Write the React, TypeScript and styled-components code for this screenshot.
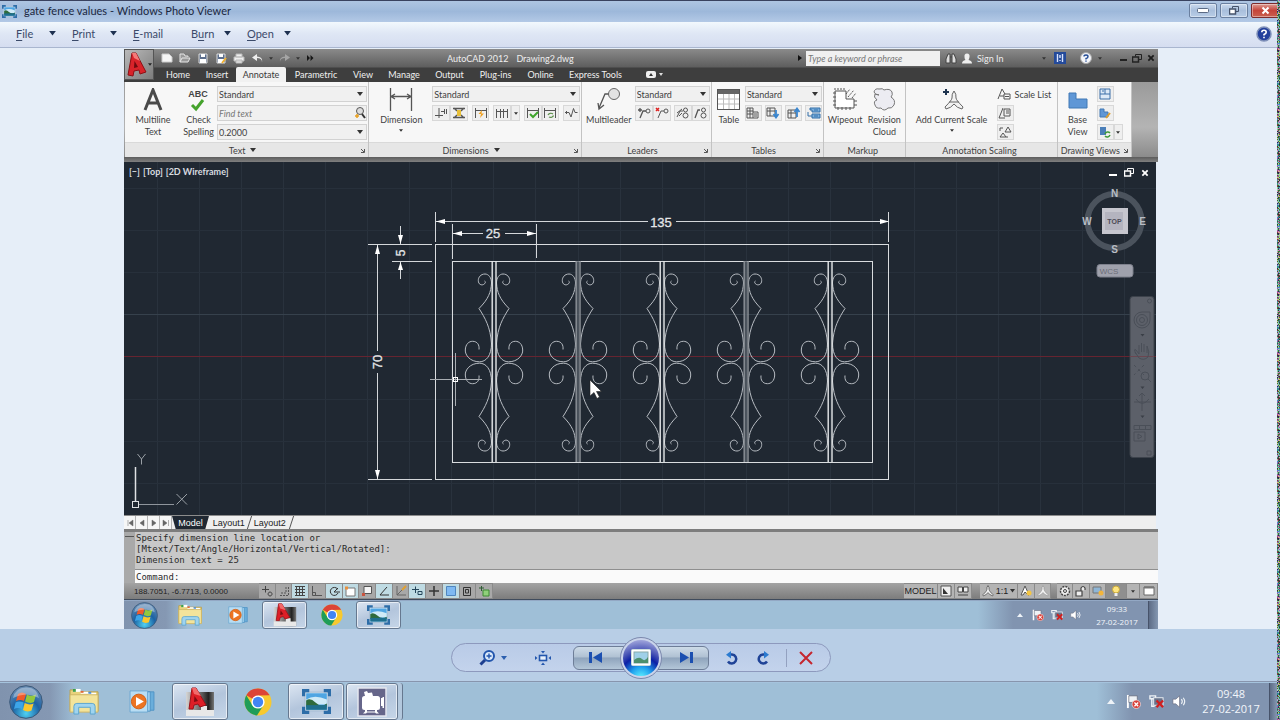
import React from 'react';
import styled, { createGlobalStyle, css } from 'styled-components';

const UI = '"Lato", "Open Sans", sans-serif';
const ARIAL = '"Liberation Sans", Arial, sans-serif';

const Global = createGlobalStyle`
  * { box-sizing: border-box; }
  html, body { margin: 0; padding: 0; }
  body { font-family: ${UI}; background: #b8cee6; }
  button, input, select {
    font: inherit; color: inherit; border: 0; padding: 0; margin: 0;
    background: none; border-radius: 0; outline: none;
  }
  button { cursor: pointer; display: inline-flex; align-items: center; justify-content: center; }
  svg { display: block; flex: none; }
`;

/* ---------- page frame ---------- */

const Screen = styled.div`
  display: grid;
  grid-template-columns: minmax(0, 1fr) 3px;
  min-height: 100vh;
`;

const Desktop = styled.div`
  display: flex;
  flex-direction: column;
  min-width: 0;
  overflow: hidden;
`;

const Edge = styled.div`
  position: relative;
  overflow: hidden;
  svg { position: absolute; inset: 0; width: 100%; height: 100%; }
`;

const TitleBar = styled.header`
  display: flex;
  align-items: center;
  height: 22px;
  padding-left: 2px;
  border-top: 1px solid #39425f;
  background: linear-gradient(#aec5e2, #9db8da 50%, #b3c9e6);
  color: #1b2740;
`;

const WindowTitle = styled.h1`
  flex: 1;
  margin: 0 0 2px 7px;
  font-size: 11px;
  line-height: 16px;
  font-weight: 400;
`;

const WindowButtons = styled.div`
  display: flex;
  gap: 3px;
  align-self: flex-start;
  margin-top: 2px;
  margin-right: -2px;
`;

const WindowButton = styled.button<{ $close?: boolean }>`
  width: 28px;
  height: 15px;
  border: 1px solid ${(p) => (p.$close ? '#7d2c2c' : '#6a7f9f')};
  border-radius: 2px;
  background: ${(p) =>
    p.$close
      ? 'linear-gradient(#dc9c94, #c5453a 50%, #c9604f)'
      : 'linear-gradient(#cbdaee, #a9bfdc 50%, #b9cde6)'};
  box-shadow: inset 0 0 0 1px rgba(255, 255, 255, 0.4);
`;

const MenuBar = styled.nav`
  display: flex;
  align-items: center;
  height: 26px;
  padding: 0 5px 2px 16px;
  border-bottom: 1px solid #a9b6cf;
  background: linear-gradient(#f2f8fd, #dfe7f5 45%, #d5ddf0);
  color: #3b4a6a;
  font-size: 11px;
`;

const MenuItem = styled.button<{ $w: number }>`
  justify-content: flex-start;
  width: ${(p) => p.$w}px;
  height: 20px;
  svg { margin-left: auto; margin-right: 16px; }
  u { text-underline-offset: 2px; }
`;

const Spacer = styled.div`
  flex: 1;
`;

const PhotoArea = styled.main`
  padding: 1px 119px 0 124px;
  background: #e6eef8;
`;

/* ---------- CAD window ---------- */

const Cad = styled.section`
  display: flex;
  flex-direction: column;
  color: #3f3f3f;
`;

const CadTop = styled.div`
  display: flex;
  height: 33px;
  background: linear-gradient(#8a8a8a, #5e5e5e 18px, #3e3e3e 19px, #3e3e3e);
`;

const AppButton = styled.button`
  width: 30px;
  height: 31px;
  gap: 1px;
  background: linear-gradient(135deg, #b9b9b9, #7c7c7c);
  border: 1px solid #555;
`;

const CadTopRows = styled.div`
  flex: 1;
  min-width: 0;
  display: flex;
  flex-direction: column;
`;

const QuickRow = styled.div`
  display: grid;
  grid-template-columns: 293px 1fr 360px;
  align-items: center;
  height: 18px;
  color: #efefef;
  font-size: 9px;
`;

const Quick = styled.div`
  display: flex;
  align-items: center;
  padding-left: 4px;
`;

const QuickButton = styled.button<{ $w?: number }>`
  width: ${(p) => p.$w ?? 18}px;
  height: 16px;
`;

const DocTitle = styled.div`
  display: flex;
  gap: 8px;
  white-space: nowrap;
`;

const InfoCenter = styled.div`
  display: flex;
  align-items: center;
  height: 18px;
`;

const Search = styled.input`
  width: 134px;
  height: 15px;
  margin: 0 4px;
  padding: 0 2px;
  background: #f0f0f0;
  color: #555;
  font-style: italic;
  &::placeholder { color: #777; opacity: 1; }
`;

const SignIn = styled.button`
  gap: 5px;
  width: 84px;
  justify-content: flex-start;
  padding-left: 4px;
`;

const TabRow = styled.div`
  display: flex;
  height: 15px;
  padding-left: 4px;
  align-items: stretch;
  color: #f0f0f0;
  font-size: 9px;
`;

const Tab = styled.button<{ $w: number; $active?: boolean }>`
  width: ${(p) => p.$w}px;
  white-space: nowrap;
  ${(p) =>
    p.$active &&
    css`
      background: #f1f1f1;
      color: #3a3a3a;
      border-radius: 2px 2px 0 0;
    `}
`;

const Ribbon = styled.div`
  display: flex;
  height: 75px;
  padding-left: 1px;
  background: linear-gradient(#9a9a9a, #b4b4b4 60%, #8b8b8b);
  font-size: 9px;
`;

const Panel = styled.section<{ $grow: number }>`
  flex: ${(p) => p.$grow} 1 0;
  min-width: 0;
  display: flex;
  flex-direction: column;
  border-right: 1px solid #c3c3c3;
  background: #f7f7f7;
`;

const PanelBody = styled.div<{ $cols: string }>`
  flex: 1;
  display: grid;
  grid-template-columns: ${(p) => p.$cols};
  align-items: start;
  padding: 4px 1px 0 1px;
`;

const PanelFoot = styled.div`
  display: flex;
  align-items: center;
  height: 15px;
  padding-right: 3px;
  border-top: 1px solid #d9d9d9;
  background: #e6e6e6;
  h2 {
    flex: 1;
    display: flex;
    justify-content: center;
    align-items: center;
    gap: 5px;
    margin: 0;
    font-size: 9px;
    font-weight: 400;
    white-space: nowrap;
  }
`;

const BigButton = styled.button<{ $gap?: number }>`
  flex-direction: column;
  justify-content: flex-start;
  justify-self: center;
  gap: ${(p) => p.$gap ?? 2}px;
  line-height: 12px;
  white-space: nowrap;
  padding-top: 2px;
`;

const Stack = styled.div`
  display: flex;
  flex-direction: column;
  gap: 3px;
`;

const Field = styled.div`
  display: grid;
  grid-template-columns: 1fr 12px;
  align-items: center;
  height: 16px;
  border: 1px solid #d2d2d2;
  background: #f0f0f0;
  select, input { grid-area: 1 / 1 / 2 / 3; width: 100%; height: 14px; padding-left: 1px; appearance: none; }
  svg { grid-area: 1 / 2; justify-self: center; pointer-events: none; }
  input { font-style: italic; }
  input::placeholder { color: #777; opacity: 1; }
`;

const ToolRow = styled.div`
  display: flex;
  justify-content: space-between;
`;

const ToolGroup = styled.div`
  display: flex;
`;

const Tool = styled.button<{ $w?: number }>`
  width: ${(p) => p.$w ?? 17}px;
  height: 16px;
  border: 1px solid #d8d8d8;
  background: #efefef;
`;

const PlainTool = styled.button`
  gap: 4px;
  height: 16px;
  justify-content: flex-start;
  white-space: nowrap;
`;

const RibbonEdge = styled.div`
  height: 5px;
  background: linear-gradient(#5c5c5c, #808080);
`;

const Viewport = styled.div`
  position: relative;
  padding-right: 2px;
  > svg { width: 100%; height: auto; }
`;

const ViewControls = styled.div`
  position: absolute;
  left: 5px;
  top: 4px;
  display: flex;
  gap: 3px;
  color: #d9dce0;
  font-size: 9px;
  line-height: 12px;
  font-weight: 700;
`;

const ViewButtons = styled.div`
  position: absolute;
  right: 9px;
  top: 6px;
  display: flex;
  gap: 7px;
`;

const LayoutTabs = styled.div`
  display: flex;
  align-items: stretch;
  height: 14px;
  margin-right: 2px;
  border-top: 1px solid #8c8c8c;
  background: #efefef;
  color: #222;
  font-family: ${ARIAL};
  font-size: 9px;
`;

const Arrow = styled.button`
  width: 12px;
  background: #f6f6f6;
  border-right: 1px solid #b5b5b5;
`;

const LayoutTab = styled.button<{ $w: number; $active?: boolean }>`
  width: ${(p) => p.$w}px;
  border-right: 1px solid #555;
  transform: skewX(-18deg);
  > span { transform: skewX(18deg); }
  ${(p) =>
    p.$active &&
    css`
      background: #202832;
      color: #fff;
      transform: none;
      > span { transform: none; }
      clip-path: polygon(0 0, 100% 0, 90% 100%, 10% 100%);
      border: 0;
    `}
`;

const CommandWindow = styled.div`
  display: grid;
  grid-template-columns: 11px 1fr;
  border-top: 3px solid #7d7d7d;
  background: #a9a9a9;
  color: #2a2a2a;
  font-family: "DejaVu Sans Mono", "Liberation Mono", monospace;
  font-size: 9px;
  line-height: 11px;
`;

const Grip = styled.div`
  margin: 4px 1px;
  height: 1px;
  background: #555;
`;

const History = styled.div`
  grid-column: 2;
  grid-row: 1;
  padding: 1px 2px 3px 1px;
  background: #c8c8c8;
  border-bottom: 1px solid #8f8f8f;
  p { margin: 0; }
`;

const CommandLine = styled.label`
  grid-column: 2;
  display: flex;
  gap: 4px;
  height: 13px;
  padding: 2px 2px 0 1px;
  background: #fafafa;
  input { flex: 1; height: 10px; }
`;

const StatusBar = styled.div`
  display: flex;
  align-items: stretch;
  height: 17px;
  border-bottom: 1px solid #3f4b5c;
  background: linear-gradient(#a3a3a3, #7c7c7c);
  color: #222;
  font-family: ${ARIAL};
  font-size: 9px;
`;

const Coords = styled.div`
  width: 135px;
  padding-left: 10px;
  font-size: 8px;
  line-height: 18px;
`;

const Toggles = styled.div`
  display: flex;
  width: 234px;
`;

const Toggle = styled.button<{ $on?: boolean }>`
  flex: 1;
  border: 1px solid #8a8a8a;
  border-width: 1px 1px 1px 0;
  background: ${(p) => (p.$on ? '#bfdbe3' : '#a8a8a8')};
`;

const StatusButton = styled.button<{ $w: number; $on?: boolean }>`
  width: ${(p) => p.$w}px;
  gap: 2px;
  border: 1px solid #8a8a8a;
  border-width: 1px 1px 1px 0;
  background: ${(p) => (p.$on ? '#8f8f8f' : '#b4b4b4')};
`;

const StatusGap = styled.div<{ $w: number }>`
  width: ${(p) => p.$w}px;
`;

/* ---------- taskbars ---------- */

const Bar = styled.footer<{ $small?: boolean }>`
  display: flex;
  align-items: stretch;
  height: ${(p) => (p.$small ? 29 : 38)}px;
  border-top: 1px solid ${(p) => (p.$small ? '#93a8c4' : '#a5c3dd')};
  background: linear-gradient(
    90deg,
    #8093ae 0,
    #8598b3 ${(p) => (p.$small ? 42 : 50)}px,
    #9fbfd7 ${(p) => (p.$small ? 64 : 76)}px,
    #9fbfd7 calc(100% - 180px),
    #8194b0 calc(100% - 145px),
    #8194b0
  );
`;

const Orb = styled.button<{ $small?: boolean }>`
  width: ${(p) => (p.$small ? 43 : 55)}px;
  padding-right: ${(p) => (p.$small ? 3 : 4)}px;
`;

const TaskButton = styled.button<{ $small?: boolean; $open?: boolean }>`
  width: ${(p) => (p.$small ? 47 : 58)}px;
  border: 1px solid transparent;
  ${(p) =>
    p.$open &&
    css`
      margin: 0 1px;
      width: ${p.$small ? 45 : 56}px;
      border-color: #66788f;
      border-radius: 3px;
      background: linear-gradient(160deg, #dce6f2, #b3c5dc 50%, #c6d6e8);
      box-shadow: inset 0 0 0 1px rgba(255, 255, 255, 0.6);
    `}
`;

const ButtonStack = styled.div`
  display: flex;
  padding-right: 4px;
  border-right: 1px solid #66788f;
  border-radius: 3px;
  background: #b3c8dd;
  button { width: 52px; margin-right: 0; }
`;

const Tray = styled.div<{ $small?: boolean }>`
  margin-left: auto;
  display: flex;
  align-items: center;
  gap: ${(p) => (p.$small ? 7 : 8)}px;
`;

const TrayArrow = styled.button<{ $small?: boolean }>`
  width: ${(p) => (p.$small ? 10 : 14)}px;
`;

const Clock = styled.time<{ $small?: boolean }>`
  width: ${(p) => (p.$small ? 50 : 64)}px;
  margin-left: ${(p) => (p.$small ? 3 : 4)}px;
  margin-right: ${(p) => (p.$small ? 5 : 3)}px;
  padding-bottom: 1px;
  text-align: center;
  color: #f2f6fb;
  font-family: "Open Sans", "Lato", sans-serif;
  font-size: ${(p) => (p.$small ? 8 : 11)}px;
  line-height: ${(p) => (p.$small ? 13 : 15)}px;
  white-space: nowrap;
`;

const ShowDesktop = styled.button<{ $small?: boolean }>`
  align-self: stretch;
  width: ${(p) => (p.$small ? 10 : 8)}px;
  margin-left: ${(p) => (p.$small ? -6 : -5)}px;
  border-left: 1px solid #47536a;
  background: linear-gradient(90deg, #5d6c86, #8497b1);
`;

/* ---------- viewer controls ---------- */

const Controls = styled.div`
  display: flex;
  justify-content: center;
  align-items: center;
  flex: 1;
  min-height: 53px;
  padding: 5px 0 0 4px;
  border-bottom: 1px solid #8795ad;
  background: #b8cee6;
`;

const Pill = styled.div`
  display: flex;
  align-items: center;
  width: 380px;
  height: 29px;
  padding-left: 14px;
  border: 1px solid #8d99bd;
  border-radius: 15px;
  background: linear-gradient(#b9cbe7, #c3d3ec);
`;

const RoundTool = styled.button<{ $w: number }>`
  width: ${(p) => p.$w}px;
  height: 26px;
  gap: 5px;
`;

const SkipButton = styled.button<{ $side: 'left' | 'right' }>`
  width: 54px;
  height: 24px;
  border: 1px solid #6e7e98;
  border-radius: ${(p) => (p.$side === 'left' ? '6px 0 0 6px' : '0 6px 6px 0')};
  background: linear-gradient(#cddbe8, #b0c1d3 45%, #8fa4bc 50%, #b3c6d8);
  ${(p) => (p.$side === 'left' ? 'margin-right: -7px; padding-right: 8px;' : 'margin-left: -7px; padding-left: 8px;')}
`;

const PlayButton = styled.button`
  z-index: 1;
  width: 42px;
  height: 42px;
  margin: -7px 0;
  border: 1px solid #7b88ad;
  border-radius: 50%;
  background: #c9d3ea;
  &::before {
    content: '';
    grid-area: 1 / 1;
    width: 36px;
    height: 36px;
    border-radius: 50%;
    background: radial-gradient(circle at 50% 105%, #5ff4ff 0, #1fa0ee 26%, #0b1fa5 50%, #4450b4 64%, #c3c6ea 100%);
  }
  display: grid;
  place-items: center;
  svg { grid-area: 1 / 1; }
`;

const Divider = styled.div`
  width: 1px;
  height: 18px;
  margin: 0 4px 0 7px;
  background: #93a1c0;
`;

/* ---------- icons ---------- */

const Caret = ({ s = 6, c = '#333' }: { s?: number; c?: string }) => (
  <svg width={s} height={s / 2 + 1} viewBox="0 0 6 4" aria-hidden="true">
    <path d="M0 0H6L3 4Z" fill={c} />
  </svg>
);

type IconProps = { w?: number; h?: number; box?: string; children: React.ReactNode };
const Icon = ({ w = 14, h, box, children }: IconProps) => (
  <svg
    width={w}
    height={h ?? w}
    viewBox={box ?? `0 0 ${w} ${h ?? w}`}
    fill="none"
    stroke="#555"
    strokeWidth="1"
    aria-hidden="true"
  >
    {children}
  </svg>
);

const PhotoIcon = ({ w }: { w: number }) => (
  <Icon w={w} h={Math.round(w * 0.86)} box="0 0 28 24">
    <rect x="3" y="3" width="22" height="18" fill="#f4f9fd" stroke="#9fb8cf" />
    <rect x="4" y="4" width="20" height="16" fill="#4fa5e2" stroke="none" />
    <path d="M4 10Q12 5 24 10V15H4Z" fill="#cfeaf7" stroke="none" />
    <path d="M4 11Q8 8 13 13T24 14V17H4Z" fill="#2f6b3c" stroke="none" />
    <path d="M4 15.500H24V20H4Z" fill="#1f6f8e" stroke="none" />
    <path d="M1.500 7V1.500H7M21 1.500H26.500V7M26.500 17V22.500H21M7 22.500H1.500V17" stroke="#2d6da8" strokeWidth="3" />
  </Icon>
);

const OrbIcon = ({ w }: { w: number }) => (
  <Icon w={w} box="0 0 34 34">
    <defs>
      <radialGradient id="orb" cx="50%" cy="85%" r="85%">
        <stop offset="0" stopColor="#4fd0f2" />
        <stop offset=".5" stopColor="#1c62a3" />
        <stop offset="1" stopColor="#6f91b6" />
      </radialGradient>
    </defs>
    <circle cx="17" cy="17" r="16.3" fill="url(#orb)" stroke="#3b5878" />
    <g stroke="none">
      <path d="M9 9Q13 6 17 9L15 16Q11 14 7 16Z" fill="#ee5a2b" />
      <path d="M18 9.500Q22 12 27 9.500L25 17Q21 19 16 16.500Z" fill="#93c83d" />
      <path d="M6.600 17.500Q10 15.500 14.500 17.500L13 24Q9 22 5 24Z" fill="#3da5e8" />
      <path d="M15.700 18Q20 20.500 24.600 18.500L22.500 25.500Q18 27.500 14 25Z" fill="#fbc72c" />
    </g>
    <path d="M4 13Q6 3 17 2.500T30 13Q17 6 4 13Z" fill="#fff" fillOpacity=".35" stroke="none" />
  </Icon>
);

const FolderIcon = ({ w }: { w: number }) => (
  <Icon w={w} h={Math.round(w * 0.88)} box="0 0 32 28">
    <path d="M1 6V2H10L12 4H30V24H1Z" fill="#e9d27c" stroke="#b99e4a" />
    <path d="M4 1H12V4H4Z" fill="#fff" stroke="none" />
    <path d="M4 1H7V4H4Z" fill="#3fa04a" stroke="none" />
    <path d="M12 4H20V6H12ZM20 5H28V8H20Z" fill="#fff" stroke="none" />
    <path d="M12 3H15V5H12Z" fill="#e06a38" stroke="none" />
    <path d="M20 4H23V6H20Z" fill="#4a90d9" stroke="none" />
    <path d="M1 7H30V25H1Z" fill="#f3e49b" stroke="#cdb565" />
    <path d="M5 27V19Q5 16 8 16H24Q27 16 27 19V27H22V20H10V27Z" fill="#9fd4ef" stroke="#5ba4cf" />
  </Icon>
);

const MediaIcon = ({ w }: { w: number }) => (
  <Icon w={w} h={Math.round(w * 0.9)} box="0 0 28 25">
    <path d="M8 2H27V22H8Z" fill="#6aaedb" stroke="#4f93c4" />
    <path d="M5 2H23V23H5Z" fill="#9ccdec" stroke="#4f93c4" />
    <path d="M1 1H20V24H1Z" fill="#b9ddf3" stroke="#6aa7d1" />
    <circle cx="10.500" cy="12.500" r="8" fill="#ec7423" stroke="#d05c10" />
    <path d="M7.500 7.500L16 12.500L7.500 17.500Z" fill="#fff" stroke="none" />
  </Icon>
);

const CadIcon = ({ w }: { w: number }) => (
  <Icon w={w} box="0 0 30 30">
    <defs>
      <linearGradient id="cadbg" x1="0" y1="0" x2="1" y2="0">
        <stop offset="0" stopColor="#d5d5d5" />
        <stop offset=".6" stopColor="#555" />
        <stop offset=".8" stopColor="#222" />
        <stop offset="1" stopColor="#777" />
      </linearGradient>
    </defs>
    <rect x="1" y="5" width="28" height="24" fill="url(#cadbg)" stroke="none" />
    <path d="M1 23H16V19H22V23H29V29H1Z" fill="#e8e8e8" stroke="none" />
    <path d="M4 22L7 1L11 1L21 18L15 20L13 17L9 18L8 22Z" fill="#dd1f27" stroke="#9c1118" />
    <path d="M9.500 9L13 14L9 15Z" fill="#7d0c12" stroke="none" />
    <path d="M7 1L11 1L16 9L9 7Z" fill="#f26a6a" stroke="none" />
  </Icon>
);

const ChromeIcon = ({ w }: { w: number }) => (
  <Icon w={w} box="0 0 28 28">
    <g stroke="none">
      <circle cx="14" cy="14" r="13.500" fill="#f7c92f" />
      <path d="M14 14L2.300 7.250A13.500 13.500 0 0 1 25.700 7.250L14 7.500Z" fill="#dc4437" />
      <path d="M2.300 7.250A13.500 13.500 0 0 0 13 27.460L19.600 17L14 14L8.400 17.250Z" fill="#1f9d58" />
      <circle cx="14" cy="14" r="6.600" fill="#fff" />
      <circle cx="14" cy="14" r="5.200" fill="#4285f4" />
    </g>
  </Icon>
);

const CameraIcon = () => (
  <Icon w={30}>
    <rect x="1" y="1" width="28" height="28" fill="#66668a" stroke="#e4e6ee" strokeWidth="1.500" />
    <g fill="#fff" stroke="none">
      <path d="M7 5L10 4L11 6L15 5.500L16 9H8Z" />
      <rect x="5" y="9" width="18" height="14" rx="2.500" />
      <path d="M24 11H25.500V10H27V21H25.500V19H24Z" />
      <path d="M8 23H10V24.500H18V23H20V24.500L22 26.500H19L18 25.500H10L9 26.500H6L8 24.500Z" />
    </g>
  </Icon>
);

const FlagIcon = ({ w }: { w: number }) => (
  <Icon w={w} box="0 0 16 16">
    <path d="M2 1V15" stroke="#fff" strokeWidth="2" />
    <path d="M3 2H12V9H3Z" fill="#eef2f6" stroke="#556" strokeWidth=".6" />
    <circle cx="11" cy="11" r="4.500" fill="#d8403a" stroke="#fff" strokeWidth=".6" />
    <path d="M9 9L13 13M13 9L9 13" stroke="#fff" strokeWidth="1.400" />
  </Icon>
);

const NetIcon = ({ w }: { w: number }) => (
  <Icon w={w} box="0 0 16 16">
    <path d="M1 2H7V5H1ZM3 5V13H6" stroke="#eef2f6" strokeWidth="1.500" />
    <rect x="5" y="4" width="10" height="8" fill="#68748c" stroke="#eef2f6" />
    <path d="M8 7L15 14M15 7L8 14" stroke="#d11f1f" strokeWidth="2.400" />
  </Icon>
);

const SoundIcon = ({ w }: { w: number }) => (
  <Icon w={w} box="0 0 16 16">
    <path d="M1 5.500H4L8 2V14L4 10.500H1Z" fill="#fff" stroke="#667" strokeWidth=".6" />
    <path d="M10 5.500Q12 8 10 10.500M12 4Q15 8 12 12" stroke="#eef2f6" strokeWidth="1.200" />
  </Icon>
);

const RestoreIcon = ({ c = '#333', fill = 'none' }: { c?: string; fill?: string }) => (
  <Icon w={10} h={9}>
    <path d="M3.500 2.500V.5H9.500V5.500H7" stroke={c} fill="none" />
    <rect x=".5" y="3" width="6" height="5" stroke={c} fill={fill} strokeWidth="1.500" />
  </Icon>
);

const CrossIcon = ({ c, w = 9 }: { c: string; w?: number }) => (
  <Icon w={w} box="0 0 9 9">
    <path d="M1.500 1.500L7.500 7.500M7.500 1.500L1.500 7.500" stroke={c} strokeWidth="2" />
  </Icon>
);

const Corner = () => (
  <Icon w={5}>
    <path d="M1 1L4 4M4.500 1V4.500H1" />
  </Icon>
);

const ScaleMark = ({ w = 12, c = '#555' }: { w?: number; c?: string }) => (
  <Icon w={w} box="0 0 22 22">
    <path
      d="M11 1Q13.500 4 13 8Q13 11 20.500 18L19.500 20Q14 18 11 14Q8 18 2.500 20L1.500 18Q9 11 9 8Q8.500 4 11 1Z"
      stroke={c}
      strokeWidth="1.500"
      fill="#f2f2f2"
    />
  </Icon>
);

/* dimension tool symbols, 14 x 12 */
const dimTools: Record<string, React.ReactNode> = {
  brk: <path d="M1 8.500H9M5 1V11M7 4.500H10M10.500 2V7M12.500 2V7" stroke="#555" />,
  adjust: (
    <>
      <path d="M1 1.500H13M1 10.500H13M2 1L5 4M12 1L9 4M2 11L5 8M12 11L9 8" strokeWidth="1.400" />
      <rect x="5" y="3" width="4" height="6" fill="#e8c03a" stroke="none" />
    </>
  ),
  quick: (
    <>
      <path d="M1.500 1V11M12.500 1V11M2 3.500H12" />
      <path d="M8 3L4.500 7H7L6 11L10 6.500H7.500Z" fill="#f0a020" stroke="none" />
    </>
  ),
  cont: <path d="M1.500 2V11M5.500 2V11M8.500 2V11M12.500 2V11M2 4.500H12" />,
  check: (
    <>
      <path d="M1.500 1V11M12.500 1V11M2 3.500H12" />
      <path d="M4 7L7 10L12 5" stroke="#3fa52c" strokeWidth="2" />
    </>
  ),
  update: (
    <>
      <path d="M1.500 1V11M12.500 1V11M2 3.500H12" />
      <path d="M5 8A3 2.500 0 0 1 10 7M10.500 8.500A3 2.500 0 0 1 6 10" stroke="#5b8f4a" strokeWidth="1.200" />
    </>
  ),
  jog: <path d="M1 5.500H5M3 4L1.500 5.500L3 7M5 5.500L7 10L9.500 1.500L11 5.500H13.500" />,
  addL: <path d="M1 3H5M3 1V5M3 11L6 4H9" strokeWidth="1.300" />,
  remL: (
    <>
      <path d="M3 11L6 4H9" />
      <path d="M1 1L4 4M4 1L1 4" stroke="#d22" strokeWidth="1.500" />
    </>
  ),
  alignL: (
    <>
      <path d="M1 10L4 4H7M3 9L6 6M1 6L6 2" />
      <circle cx="9.500" cy="3" r="2" />
      <circle cx="9.500" cy="8.500" r="2.500" />
    </>
  ),
  collectL: (
    <>
      <path d="M1 11L4 3H6" strokeWidth="1.300" />
      <circle cx="9.500" cy="3" r="2" />
      <circle cx="9.500" cy="8.500" r="2.500" />
    </>
  ),
  tblA: <path d="M1 1H7V11H1ZM1 4H7M1 7H7M4 1V11M7 5H12V11H7M8 7H11M8 9H11" />,
  tblB: (
    <>
      <path d="M1 1H9V9H1ZM1 4H9M4 1V9" />
      <path d="M10 3V9M7.500 7L10 10.500L12.500 7" stroke="#3a86cf" strokeWidth="1.800" />
    </>
  ),
  tblC: (
    <>
      <path d="M1 3H9V11H1ZM1 6H9M4 3V11" />
      <path d="M10 10V3M7.500 5L10 1.500L12.500 5" stroke="#3a86cf" strokeWidth="1.800" />
    </>
  ),
  tblD: (
    <>
      <path d="M3 1H13V5H5V3H3ZM5 7H13V11H5Z" fill="#79aedd" stroke="#336fa8" />
      <path d="M1 5V9H5M7 9H11M7 3H11" stroke="#336fa8" />
    </>
  ),
};
const RingEnd = () => <circle cx="11" cy="4" r="2" />;
const DimTool = ({ id }: { id: string }) => (
  <Icon w={14} h={12}>
    {dimTools[id]}
    {(id === 'addL' || id === 'remL') && <RingEnd />}
  </Icon>
);

const statusSymbols: [string, React.ReactNode, boolean][] = [
  ['Infer constraints', <path key="a" d="M1 4.500H8M4.500 1V7.500M9 7a2 2 0 1 0 .1 0" stroke="#444" />, false],
  ['Snap', <path key="a" d="M2 10.500H10.500V2M8 2V8H2" strokeDasharray="2 1" />, false],
  ['Grid', <path key="a" d="M1 1.500H11M1 4.500H11M1 7.500H11M1 10.500H11M2.500 1V11M5.500 1V11M8.500 1V11" stroke="#444" />, true],
  ['Ortho', <path key="a" d="M1.500 1V10.500H11M2 7.500H4.500V10" />, false],
  ['Polar', <path key="a" d="M9.500 4A4 4 0 1 0 10 8M6 7H12M6 7L10 3" stroke="#333" />, true],
  ['Osnap', (
    <g key="a">
      <path d="M2 3H11V11H2Z" fill="#fff" stroke="#777" />
      <path d="M1 1.500H4V4.500H1Z" fill="#e8913e" stroke="none" />
    </g>
  ), true],
  ['3D Osnap', (
    <g key="a">
      <path d="M3 1.500H10.500V8.500H3Z" fill="#f5f5f5" stroke="#555" />
      <path d="M1 8H4V11H1Z" fill="#c9543f" stroke="none" />
    </g>
  ), false],
  ['Tracking', <path key="a" d="M9 2L2 10H11" stroke="#333" />, true],
  ['Dynamic UCS', (
    <g key="a">
      <path d="M2 1V10H11M2 10L8 4" stroke="#666" />
      <path d="M7 5L11 1" stroke="#e0a030" strokeWidth="2" />
    </g>
  ), false],
  ['Dynamic input', <path key="a" d="M1 4.500H8M4.500 1.500V8M7 6.500H11V9.500H7Z" stroke="#25465a" />, true],
  ['Lineweight', <path key="a" d="M1 6H11M6 1V11" stroke="#333" strokeWidth="1.500" />, false],
  ['Transparency', <path key="a" d="M1.500 1.500H10.500V10.500H1.500Z" fill="#7fb9f2" stroke="#4f86bf" />, true],
  ['Quick properties', <path key="a" d="M2.500 2.500H9.500V10.500H2.500ZM4.500 4.500H7.500V8H4.500Z" stroke="#333" />, false],
  ['Selection cycling', (
    <g key="a">
      <path d="M1 3H6M3.500 1V6" stroke="#2f5d33" />
      <path d="M5 5H11V11H5Z" fill="#8fd07a" stroke="#3f8a35" />
    </g>
  ), false],
];

/* ---------- drawing ---------- */

const verticals = Array.from({ length: 24 }, (_, i) => 157.5 + Math.round(i * 42.05));
const horizontals = [188.5, 230.5, 272.5, 314.5, 399.5, 441.5, 483.5];
const posts = [494, 578, 662, 746, 830];

const HalfScroll = () => (
  <g>
    <path d="M2.500 283C2.500 277.500 5.500 274 9 274C13.500 274 15.700 277.500 15.700 280.500C15.700 284.500 12.500 285.500 10.500 284.500C8.500 283.500 8 281.500 9.500 281" />
    <path d="M2.500 283C3 292 5.500 299 15 308.500C9 318 3.500 327 2.500 344" />
    <path d="M2.500 343C2.500 356 8 361.800 14.500 361.800C24 361.800 29 355 28.700 350C28.500 344 25 341.300 21.500 341.300C16.500 341.300 14.500 345 15 349.500" />
  </g>
);

const FencePost = ({ x, soft }: { x: number; soft: boolean }) => (
  <g transform={`translate(${x} 0)`}>
    {[1, -1].map((sx) => (
      <g key={sx} transform={`scale(${sx} 1)`}>
        <HalfScroll />
        <g transform="translate(0 725) scale(1 -1)">
          <HalfScroll />
        </g>
      </g>
    ))}
    <g stroke={soft ? '#898e95' : '#e6e8ea'} strokeWidth={soft ? 1.5 : 1.4}>
      <path d="M-1.800 261V462M2 261V462" />
      {soft && <path d="M0 261V462" stroke="#59616a" />}
    </g>
  </g>
);

const Drawing = () => (
  <svg viewBox="124 162 1032 353" fill="none" role="img" aria-label="Gate fence drawing with dimensions">
    <rect x="124" y="162" width="1032" height="353" fill="#202832" />
    <g stroke="#29323d">
      {verticals.map((x) => (
        <path key={x} d={`M${x} 162V515`} />
      ))}
      {horizontals.map((y) => (
        <path key={y} d={`M124 ${y}H1156`} stroke={y === 314.5 ? '#36414c' : '#27303b'} />
      ))}
    </g>
    <path d="M124 356.500H1156" stroke="#662430" />

    <g stroke="#d9dcdf">
      <rect x="435.500" y="244.500" width="453" height="235" />
      <rect x="452.500" y="261.500" width="420" height="201" />
    </g>
    <g stroke="#b8bdc3">
      {posts.map((x, i) => (
        <FencePost key={x} x={x} soft={i % 2 === 1} />
      ))}
    </g>

    <g stroke="#d4d7da">
      <path d="M435.500 212V242M888.500 212V242M436 221.500H648M676 221.500H889" />
      <path d="M452.500 224V259M536.500 224V258M453 233.500H483M505 233.500H536" />
      <path d="M368 244.500H432M368 479.500H432M377.500 245V351M377.500 373V479" />
      <path d="M392 261.500H432M400.500 226V244M400.500 262V279" />
    </g>
    <g fill="#fff">
      <path d="M436 221.500L445 219V224ZM889 221.500L880 219V224Z" />
      <path d="M453 233.500L462 231V236ZM536 233.500L527 231V236Z" />
      <path d="M377.500 245L375 254H380ZM377.500 479L375 470H380Z" />
      <path d="M400.500 244L398 235H403ZM400.500 262L398 270H403Z" />
    </g>
    <g fill="#e4e6e8" fontFamily={ARIAL} fontSize="13" textAnchor="middle" stroke="#e4e6e8" strokeWidth=".3">
      <text x="661" y="227">135</text>
      <text x="493" y="238">25</text>
      <text transform="translate(382 362) rotate(-90)">70</text>
      <text transform="translate(404.500 253) rotate(-90)" fontSize="12">5</text>
    </g>

    <g stroke="#a8adb2">
      <path d="M430 379.500H482M455.500 353V406" />
      <rect x="453.500" y="377.500" width="4" height="4" stroke="#fff" />
    </g>
    <path d="M590 380V396L594 392.500L597 398.500L599.500 397L596.500 391.500H601.500Z" fill="#fff" stroke="#222" strokeWidth=".6" />

    <g stroke="#dfe1e4">
      <path d="M135.500 467V501" strokeWidth="1.500" />
      <path d="M139 504.500H174" stroke="#8f959c" />
      <rect x="132.500" y="501.500" width="6" height="6" />
      <path d="M176.500 494L187 504.500M187 494L176.500 504.500M137.500 454L141.500 459L145.500 454M141.500 459V464.500" stroke="#9aa0a6" />
    </g>

    <circle cx="1114.500" cy="221" r="27" stroke="#4b535d" strokeWidth="6" />
    <g fill="#b9bdc4" fontFamily={ARIAL} fontWeight="700" fontSize="10" textAnchor="middle">
      <text x="1114.500" y="197">N</text>
      <text x="1114.500" y="253">S</text>
      <text x="1142.500" y="225">E</text>
      <text x="1087" y="225">W</text>
    </g>
    <rect x="1102" y="208" width="26" height="26" fill="#c6c6ce" />
    <rect x="1105" y="212" width="18" height="18" fill="#b4b4bf" />
    <text x="1114.500" y="224" fill="#4c4c57" fontFamily={ARIAL} fontSize="7" fontWeight="700" textAnchor="middle">
      TOP
    </text>
    <rect x="1097" y="264.500" width="36" height="12.500" rx="3" fill="#9fa1ac" stroke="#7d808c" />
    <text x="1109" y="273.500" fill="#6b6d78" fontFamily={ARIAL} fontSize="8" textAnchor="middle">
      WCS
    </text>

    <rect x="1130" y="296.500" width="24" height="161" rx="3" fill="#5c6069" stroke="#3c424b" />
    <path d="M1130 356.500H1154" stroke="#6b4650" />
    <g stroke="#4a4f58">
      <path d="M1134 320A8 8 0 0 1 1142 312H1150V320A8 8 0 0 1 1134 320Z" />
      <circle cx="1142" cy="320" r="5.500" />
      <circle cx="1142" cy="320" r="2.500" />
      <circle cx="1149.500" cy="301" r="2" />
      <path d="M1136 354Q1133 348 1136 350L1139 354V345M1141.500 352V343M1144 352V344M1147 353V346Q1150 352 1148 357Q1144 361 1139 358L1135 352" />
      <path d="M1134 365L1144 375M1144 365L1134 375" strokeDasharray="3 3" />
      <circle cx="1145" cy="376" r="4" />
      <path d="M1148 379L1151 382M1134 402H1151M1142 393V411M1139 396L1142 393L1145 396M1136 399Q1142 408 1149 399" />
      <path d="M1134 425.500H1151V429.500H1134ZM1139.500 425V429M1145.500 425V429M1134 432H1145V441H1134ZM1138 434L1142 436.500L1138 439Z" />
      <path d="M1147 451H1151V455H1147Z" />
    </g>
    <g fill="#3a3f47">
      <path d="M1140.500 334H1144.500L1142.500 336.500ZM1140.500 386.500H1144.500L1142.500 389ZM1140.500 415.500H1144.500L1142.500 418Z" />
    </g>
  </svg>
);

const noiseColors = ['#3c6b3a', '#a04e9c', '#2b2b46', '#c8cf6e', '#5a7fd0', '#d08fa8', '#7fd09a', '#804038', '#b9b9c8', '#2f8f8a'];
const noiseCells = Array.from({ length: 183 }).reduce<number[]>((seq) => {
  const last = seq.length ? seq[seq.length - 1] : 17;
  return [...seq, (last * 1103 + 12345) % 7919];
}, []);
const Noise = () => (
  <svg aria-hidden="true">
    <defs>
      <pattern id="noise" width="3" height="61" patternUnits="userSpaceOnUse">
        {noiseCells.map((n, i) => (
          <rect key={i} x={i % 3} y={Math.floor(i / 3)} width="1" height="1" fill={noiseColors[n % 10]} />
        ))}
      </pattern>
    </defs>
    <rect width="100%" height="100%" fill="url(#noise)" />
  </svg>
);

/* ---------- composed parts ---------- */

const Combo = ({ label, value }: { label: string; value: string }) => (
  <Field>
    <select aria-label={label} defaultValue={value}>
      <option>{value}</option>
    </select>
    <Caret />
  </Field>
);

const Foot = ({ title, caret, corner }: { title: string; caret?: boolean; corner?: boolean }) => (
  <PanelFoot>
    <h2>
      {title}
      {caret && <Caret />}
    </h2>
    {corner && <Corner />}
  </PanelFoot>
);

const Taskbar = ({ small, time, camera }: { small?: boolean; time: string; camera?: boolean }) => {
  const k = (big: number, little: number) => (small ? little : big);
  return (
    <Bar $small={small}>
      <Orb $small={small} aria-label="Start">
        <OrbIcon w={k(34, 27)} />
      </Orb>
      <TaskButton $small={small} aria-label="Explorer">
        <FolderIcon w={k(31, 25)} />
      </TaskButton>
      <TaskButton $small={small} aria-label="Media Player">
        <MediaIcon w={k(26, 20)} />
      </TaskButton>
      <TaskButton $small={small} $open aria-label="AutoCAD">
        <CadIcon w={k(30, 24)} />
      </TaskButton>
      <TaskButton $small={small} aria-label="Chrome">
        <ChromeIcon w={k(28, 22)} />
      </TaskButton>
      <TaskButton $small={small} $open aria-label="Photo Viewer">
        <PhotoIcon w={k(29, 23)} />
      </TaskButton>
      {camera && (
        <ButtonStack>
          <TaskButton $open aria-label="Screen recorder">
            <CameraIcon />
          </TaskButton>
        </ButtonStack>
      )}
      <Tray $small={small}>
        <TrayArrow $small={small} aria-label="Show hidden icons">
          <svg width={k(8, 6)} height={k(5, 4)} viewBox="0 0 8 5" aria-hidden="true">
            <path d="M0 5L4 0L8 5Z" fill="#eef3f8" />
          </svg>
        </TrayArrow>
        <FlagIcon w={k(15, 12)} />
        <NetIcon w={k(15, 12)} />
        <SoundIcon w={k(15, 12)} />
        <Clock $small={small}>
          {time}
          <br />
          27-02-2017
        </Clock>
        <ShowDesktop $small={small} aria-label="Show desktop" />
      </Tray>
    </Bar>
  );
};

const tabs: [string, number][] = [
  ['Home', 40],
  ['Insert', 38],
  ['Annotate', 50],
  ['Parametric', 60],
  ['View', 34],
  ['Manage', 48],
  ['Output', 43],
  ['Plug-ins', 49],
  ['Online', 41],
  ['Express Tools', 69],
];

const CadWindow = () => (
  <Cad>
    <CadTop>
      <AppButton aria-label="Application menu">
        <svg width="20" height="26" viewBox="0 0 20 26" aria-hidden="true">
          <path d="M1 23L5 1H9L19 20L13 22L12 18L7 19L6 24Z" fill="#d8232a" stroke="#8d1015" />
          <path d="M7.500 9L11 15L7 16Z" fill="#6f0a0f" />
          <path d="M5 1H9L13 9L7 6Z" fill="#f47a78" />
        </svg>
        <Caret s={4} c="#222" />
      </AppButton>
      <CadTopRows>
        <QuickRow>
          <Quick>
            <QuickButton aria-label="New">
              <Icon w={12} h={10}><path d="M1 1H8L11 4V9H1Z" fill="#f5f5f5" stroke="#ccc" /></Icon>
            </QuickButton>
            <QuickButton aria-label="Open">
              <Icon w={12} h={10}><path d="M1 9V1H5L6 3H9V4M1 9L3 5H11L9 9Z" stroke="#e5e5e5" fill="#999" /></Icon>
            </QuickButton>
            <QuickButton aria-label="Save">
              <Icon w={10} h={11}><path d="M1 1H9V10H1Z" fill="#5d6f8d" stroke="#ddd" /><path d="M3 1H7V4H3ZM2 6H8V10H2Z" fill="#fff" stroke="none" /></Icon>
            </QuickButton>
            <QuickButton aria-label="Save as">
              <Icon w={11} h={11}><path d="M1 1H9V10H1Z" fill="#5d6f8d" stroke="#ddd" /><path d="M3 1H7V4H3ZM2 6H8V10H2Z" fill="#fff" stroke="none" /><path d="M6 10L10 5" stroke="#f0b030" strokeWidth="2" /></Icon>
            </QuickButton>
            <QuickButton aria-label="Plot">
              <Icon w={12} h={11}><path d="M3 1H9V4H3ZM1 4H11V8H1ZM3 7H9V10H3Z" fill="#eee" stroke="#bbb" /></Icon>
            </QuickButton>
            <QuickButton aria-label="Undo">
              <Icon w={11} h={9}><path d="M10 8Q10 4 5 4V7L0 3.500L5 0V2.500Q11 3 10 8Z" fill="#eee" stroke="none" /></Icon>
            </QuickButton>
            <QuickButton $w={9} aria-label="Undo list"><Caret s={4} /></QuickButton>
            <QuickButton aria-label="Redo">
              <Icon w={11} h={9}><path d="M1 8Q1 4 6 4V7L11 3.500L6 0V2.500Q0 3 1 8Z" fill="#a5a5a5" stroke="none" /></Icon>
            </QuickButton>
            <QuickButton $w={9} aria-label="Redo list"><Caret s={4} /></QuickButton>
            <QuickButton $w={16} aria-label="More tools">
              <Icon w={7} h={6}><path d="M0 0L3 3L0 6ZM3.500 0L6.500 3L3.500 6Z" fill="#161616" stroke="none" /></Icon>
            </QuickButton>
          </Quick>
          <DocTitle>
            <span>AutoCAD 2012</span>
            <span>Drawing2.dwg</span>
          </DocTitle>
          <InfoCenter>
            <Icon w={4} h={6}><path d="M0 0L4 3L0 6Z" fill="#111" stroke="none" /></Icon>
            <Search aria-label="Search help" placeholder="Type a keyword or phrase" />
            <QuickButton $w={14} aria-label="Search">
              <Icon w={12} h={11}><path d="M1 10V6L3 1H5V10ZM7 10V1H9L11 6V10ZM5 4H7" fill="#ddd" stroke="#444" /></Icon>
            </QuickButton>
            <SignIn>
              <Icon w={10} h={11}><path d="M5 .5Q8 .5 7.500 4Q7 6.500 6.500 7Q10 7.500 10 10.500H0Q0 7.500 3.500 7Q2.500 6 2.500 4Q2 .5 5 .5Z" fill="#eee" stroke="none" /></Icon>
              Sign In
            </SignIn>
            <Caret s={4} />
            <QuickButton $w={28} aria-label="Exchange">
              <Icon w={12}><rect width="12" height="12" fill="#244a9a" stroke="none" /><path d="M3.500 2V10M8.500 2V10M6 3V6M6 8V9" stroke="#dbe6ff" strokeWidth="1.400" /></Icon>
            </QuickButton>
            <QuickButton $w={24} aria-label="Help">
              <Icon w={12}><circle cx="6" cy="6" r="5.500" fill="#f4f6fa" stroke="#aaa" /><path d="M4 4.500Q4 3 6 3T8 4.700Q8 6 6 6.500V7.500M6 8.500V9.800" stroke="#234b95" strokeWidth="1.400" /></Icon>
            </QuickButton>
            <Caret s={4} />
            <Spacer />
            <QuickButton $w={12} aria-label="Minimize">
              <Icon w={8} h={8}><path d="M0 6H7" stroke="#222" strokeWidth="2" /></Icon>
            </QuickButton>
            <QuickButton $w={14} aria-label="Restore"><RestoreIcon c="#222" /></QuickButton>
            <QuickButton $w={14} aria-label="Close"><CrossIcon c="#1c1c1c" w={8} /></QuickButton>
          </InfoCenter>
        </QuickRow>
        <TabRow role="tablist">
          {tabs.map(([name, w]) => (
            <Tab key={name} role="tab" $w={w} $active={name === 'Annotate'} aria-selected={name === 'Annotate'}>
              {name}
            </Tab>
          ))}
          <Tab $w={50} aria-label="Ribbon display">
            <Icon w={18} h={7}><rect y="0" width="10" height="7" rx="2" fill="#eee" stroke="none" /><path d="M3 5L5 2L7 5Z" fill="#333" stroke="none" /><path d="M13 2H17L15 5Z" fill="#ddd" stroke="none" /></Icon>
          </Tab>
        </TabRow>
      </CadTopRows>
    </CadTop>

    <Ribbon>
      <Panel $grow={245}>
        <PanelBody $cols="54px 37px 1fr">
          <BigButton $gap={3}>
            <svg width="20" height="23" viewBox="0 0 20 23" aria-hidden="true">
              <path d="M2 22L10 2L18 22M5 15H15" stroke="#4a4a4a" strokeWidth="3" fill="none" />
            </svg>
            <span>Multiline<br />Text</span>
          </BigButton>
          <BigButton $gap={1}>
            <svg width="22" height="25" viewBox="0 0 22 25" aria-hidden="true">
              <text x="11" y="9" textAnchor="middle" fontFamily="Liberation Sans" fontWeight="700" fontSize="9" fill="#444">ABC</text>
              <path d="M5 17L9 21L16 12" stroke="#45a32d" strokeWidth="3" fill="none" />
            </svg>
            <span>Check<br />Spelling</span>
          </BigButton>
          <Stack>
            <Combo label="Text style" value="Standard" />
            <Field>
              <input aria-label="Find text" placeholder="Find text" />
              <Icon w={12}><circle cx="6" cy="4" r="3.500" stroke="#555" fill="#ddd" /><path d="M8 7L11 11" stroke="#333" strokeWidth="2" /><path d="M3 7V11M1 9H5" stroke="#e8a020" strokeWidth="1.500" /></Icon>
            </Field>
            <Combo label="Text height" value="0.2000" />
          </Stack>
        </PanelBody>
        <Foot title="Text" caret corner />
      </Panel>

      <Panel $grow={213}>
        <PanelBody $cols="62px 1fr">
          <BigButton $gap={3}>
            <Icon w={24} h={23}><path d="M1.500 0V23M22.500 0V23M2 8.500H22M6 6L2 8.500L6 11M18 6L22 8.500L18 11" stroke="#555" strokeWidth="1.300" /></Icon>
            Dimension
            <Caret s={4} />
          </BigButton>
          <Stack>
            <Combo label="Dimension style" value="Standard" />
            <ToolRow>
              <ToolGroup>
                <Tool $w={18} aria-label="Break"><DimTool id="brk" /></Tool>
                <Tool $w={18} aria-label="Adjust space"><DimTool id="adjust" /></Tool>
              </ToolGroup>
              <Tool aria-label="Quick dimension"><DimTool id="quick" /></Tool>
              <ToolGroup>
                <Tool $w={18} aria-label="Continue"><DimTool id="cont" /></Tool>
                <Tool $w={9} aria-label="Continue options"><Caret s={4} /></Tool>
              </ToolGroup>
              <ToolGroup>
                <Tool $w={18} aria-label="Inspect"><DimTool id="check" /></Tool>
                <Tool aria-label="Update"><DimTool id="update" /></Tool>
              </ToolGroup>
              <Tool aria-label="Jog line"><DimTool id="jog" /></Tool>
            </ToolRow>
          </Stack>
        </PanelBody>
        <Foot title="Dimensions" caret corner />
      </Panel>

      <Panel $grow={130}>
        <PanelBody $cols="52px 1fr">
          <BigButton $gap={3}>
            <Icon w={24} h={23}><circle cx="17" cy="6" r="5.500" stroke="#666" fill="#e3e3e3" /><path d="M11.500 6H8L2 20M1 15L2 21L7 17" stroke="#555" strokeWidth="1.300" /></Icon>
            Multileader
          </BigButton>
          <Stack>
            <Combo label="Leader style" value="Standard" />
            <ToolRow>
              <ToolGroup>
                <Tool $w={18} aria-label="Add leader"><DimTool id="addL" /></Tool>
                <Tool $w={18} aria-label="Remove leader"><DimTool id="remL" /></Tool>
              </ToolGroup>
              <ToolGroup>
                <Tool $w={18} aria-label="Align"><DimTool id="alignL" /></Tool>
                <Tool $w={18} aria-label="Collect"><DimTool id="collectL" /></Tool>
              </ToolGroup>
            </ToolRow>
          </Stack>
        </PanelBody>
        <Foot title="Leaders" corner />
      </Panel>

      <Panel $grow={112}>
        <PanelBody $cols="32px 1fr">
          <BigButton $gap={3}>
            <Icon w={23}><rect x=".5" y="1.500" width="22" height="20" fill="#fff" stroke="#555" /><rect x="1" y="2" width="21" height="4" fill="#666" stroke="none" /><path d="M1 11H22M1 16H22M6.500 6V21M12 6V21M17.500 6V21" stroke="#bcbcbc" /></Icon>
            Table
          </BigButton>
          <Stack>
            <Combo label="Table style" value="Standard" />
            <ToolRow>
              <Tool aria-label="Extract data"><DimTool id="tblA" /></Tool>
              <Tool aria-label="Download from source"><DimTool id="tblB" /></Tool>
              <Tool aria-label="Upload to source"><DimTool id="tblC" /></Tool>
              <Tool aria-label="Link data"><DimTool id="tblD" /></Tool>
            </ToolRow>
          </Stack>
        </PanelBody>
        <Foot title="Tables" corner />
      </Panel>

      <Panel $grow={81}>
        <PanelBody $cols="40px 1fr">
          <BigButton $gap={3}>
            <Icon w={24} h={23}><path d="M2 3V20H21V11H13V3Z" fill="#fff" /><path d="M13 6L17 1M15 9L21 2M19 10L23 5M1 1H12" strokeDasharray="2 1" /><path d="M0 5H3M0 9H3M0 13H3M0 17H3M5 19V22M9 19V22M13 19V22M17 19V22M21 13H24M21 17H24" /></Icon>
            Wipeout
          </BigButton>
          <BigButton $gap={3}>
            <Icon w={24} h={23}><path d="M7 7Q3 7 2 4Q3 0 7 1Q11 0 12 2Q18 0 20 4Q21 7 19 9Q24 12 22 17Q20 21 16 20Q12 24 9 20Q4 21 3 17Q1 13 5 12Q1 9 3 6Z" fill="#ececf2" stroke="#777" /></Icon>
            <span>Revision<br />Cloud</span>
          </BigButton>
        </PanelBody>
        <Foot title="Markup" />
      </Panel>

      <Panel $grow={152}>
        <PanelBody $cols="90px 1fr">
          <BigButton $gap={3}>
            <Icon w={26} h={23}>
              <path d="M15 3Q17.500 6 17 10Q17 12 24 19L23 21Q18 20 15 16Q12 20 7 21L6 19Q13 12 13 10Q12.500 6 15 3Z" fill="#f2f2f2" stroke="#666" />
              <path d="M10 14H20" stroke="#666" />
              <path d="M4 4H10M7 1V7" stroke="#1f3550" strokeWidth="2" />
            </Icon>
            Add Current Scale
            <Caret s={4} />
          </BigButton>
          <Stack>
            <PlainTool><Icon w={14} h={12}><path d="M5 1L1 11M5 1L8 6M3 8H7M7 6H13V11H7ZM8 8.500H12" stroke="#555" /></Icon>Scale List</PlainTool>
            <Tool aria-label="Add/delete scales"><Icon w={14} h={12}><path d="M5 1L1 11M1 11H7M6 2H12V9H6ZM8 4H11M8 6H11" /></Icon></Tool>
            <Tool aria-label="Sync scale positions"><Icon w={14} h={12}><path d="M2 5V2H5M10 1L7 6H13ZM5 7L2 11H8ZM8 11H10" /></Icon></Tool>
          </Stack>
        </PanelBody>
        <Foot title="Annotation Scaling" />
      </Panel>

      <Panel $grow={74}>
        <PanelBody $cols="38px 1fr">
          <BigButton $gap={3}>
            <Icon w={20} h={23}><path d="M1 5H8V11H19V20H1Z" fill="#5f97d6" stroke="#4178b5" /></Icon>
            <span>Base<br />View</span>
          </BigButton>
          <Stack>
            <Tool aria-label="Projected view"><Icon w={12}><path d="M1 1H11V11H1ZM1 6H11M6 1V6M3 3H5" stroke="#3a6ea8" fill="#dce9f7" /></Icon></Tool>
            <Tool aria-label="Edit view"><Icon w={12}><path d="M1 2H5V5H9V10H1Z" fill="#5f97d6" stroke="#4178b5" /><path d="M7 11L11 6" stroke="#e0a030" strokeWidth="2" /></Icon></Tool>
            <ToolGroup>
              <Tool aria-label="Update view"><Icon w={12}><path d="M1 1H7V9H1Z" fill="#4b7fb9" stroke="none" /><path d="M6 8A3 3 0 0 1 11 7M11 9A3 3 0 0 1 6 10" stroke="#3f9a3a" strokeWidth="1.500" /></Icon></Tool>
              <Tool $w={9} aria-label="Update options"><Caret s={4} /></Tool>
            </ToolGroup>
          </Stack>
        </PanelBody>
        <Foot title="Drawing Views" corner />
      </Panel>
      <StatusGap $w={26} />
    </Ribbon>
    <RibbonEdge />

    <Viewport>
      <Drawing />
      <ViewControls>
        <button>[−]</button>
        <button>[Top]</button>
        <button>[2D Wireframe]</button>
      </ViewControls>
      <ViewButtons>
        <button aria-label="Minimize view"><Icon w={8} h={9}><path d="M0 7H8" stroke="#fff" strokeWidth="2" /></Icon></button>
        <button aria-label="Restore view"><RestoreIcon c="#fff" /></button>
        <button aria-label="Close view"><CrossIcon c="#fff" w={8} /></button>
      </ViewButtons>
    </Viewport>

    <LayoutTabs>
      {['M3 1V7M8 1L4 4L8 7Z', 'M7 1L3 4L7 7Z', 'M3 1L7 4L3 7Z', 'M7.500 1V7M2 1L6 4L2 7Z'].map((d, i) => (
        <Arrow key={d} aria-label={['First', 'Previous', 'Next', 'Last'][i]}>
          <Icon w={9} h={8}><path d={d} fill="#666" stroke="#666" strokeWidth=".5" /></Icon>
        </Arrow>
      ))}
      <LayoutTab $w={37} $active><span>Model</span></LayoutTab>
      <LayoutTab $w={41}><span>Layout1</span></LayoutTab>
      <LayoutTab $w={42}><span>Layout2</span></LayoutTab>
    </LayoutTabs>

    <CommandWindow>
      <Grip />
      <History>
        <p>Specify dimension line location or</p>
        <p>[Mtext/Text/Angle/Horizontal/Vertical/Rotated]:</p>
        <p>Dimension text = 25</p>
      </History>
      <CommandLine>
        Command:
        <input />
      </CommandLine>
    </CommandWindow>

    <StatusBar>
      <Coords>188.7051, -6.7713, 0.0000</Coords>
      <Toggles>
        {statusSymbols.map(([name, art, on]) => (
          <Toggle key={name} aria-label={name} $on={on}>
            <Icon w={12}>{art}</Icon>
          </Toggle>
        ))}
      </Toggles>
      <Spacer />
      <StatusButton $w={34}>MODEL</StatusButton>
      <StatusButton $w={17} aria-label="Quick view layouts"><Icon w={12}><path d="M1 1H11V11H1Z" fill="#eee" /><path d="M3 3V9H8Z" fill="#333" stroke="none" /></Icon></StatusButton>
      <StatusButton $w={17} aria-label="Quick view drawings"><Icon w={12}><path d="M1 2H5.500V7H1ZM6.500 2H11V7H6.500ZM1 10H11" fill="#eee" stroke="#444" /></Icon></StatusButton>
      <StatusGap $w={8} />
      <StatusButton $w={38}><ScaleMark />1:1<Caret s={5} /></StatusButton>
      <StatusButton $w={17} aria-label="Annotation visibility"><Icon w={12}><path d="M5 1L1 10H3L5 7L8 10H9Z" fill="#fff" /><circle cx="9" cy="8" r="2.500" fill="#f4c542" stroke="none" /></Icon></StatusButton>
      <StatusButton $w={16} aria-label="Auto scale"><ScaleMark c="#999" /></StatusButton>
      <StatusGap $w={6} />
      <StatusButton $w={16} aria-label="Workspace"><Icon w={12}><circle cx="6" cy="6" r="4.500" fill="#eee" stroke="#444" strokeWidth="1.500" strokeDasharray="2 1" /><circle cx="6" cy="6" r="1.500" stroke="#444" /></Icon></StatusButton>
      <StatusButton $w={17} aria-label="Lock"><Icon w={12}><path d="M1 6H7V11H1ZM6 6V3Q8 0 10 3V5" fill="#eee" stroke="#444" strokeWidth="1.200" /></Icon></StatusButton>
      <StatusButton $w={16} aria-label="Hardware acceleration"><Icon w={12}><path d="M1 2H9V8H1Z" fill="#8fb6d6" stroke="#777" /><circle cx="9" cy="8" r="2.500" fill="#f4b53a" stroke="none" /></Icon></StatusButton>
      <StatusButton $w={21} $on aria-label="Isolate objects"><Icon w={12}><circle cx="6" cy="4.500" r="3.500" fill="#ffe680" stroke="#c9a93a" /><path d="M4.500 8H7.500V11H4.500Z" fill="#eee" stroke="none" /></Icon></StatusButton>
      <StatusButton $w={13} aria-label="Status menu"><Caret s={4} /></StatusButton>
      <StatusButton $w={18} aria-label="Clean screen"><Icon w={12}><path d="M1 2H11V10H1Z" fill="#fff" stroke="#666" /><path d="M1 2.500H11" strokeWidth="2" stroke="#777" /></Icon></StatusButton>
    </StatusBar>

    <Taskbar small time="09:33" />
  </Cad>
);

export default function App() {
  return (
    <>
      <Global />
      <Screen>
        <Desktop>
          <TitleBar>
            <PhotoIcon w={15} />
            <WindowTitle>gate fence values - Windows Photo Viewer</WindowTitle>
            <WindowButtons>
              <WindowButton aria-label="Minimize">
                <Icon w={12} h={5}><rect x=".5" y=".5" width="11" height="4" rx="1" fill="#fff" stroke="#5a6a84" /></Icon>
              </WindowButton>
              <WindowButton aria-label="Restore"><RestoreIcon c="#46536b" fill="#fff" /></WindowButton>
              <WindowButton $close aria-label="Close"><CrossIcon c="#fff" /></WindowButton>
            </WindowButtons>
          </TitleBar>
          <MenuBar>
            <MenuItem $w={56}><span><u>F</u>ile</span><Caret s={7} c="#1d3050" /></MenuItem>
            <MenuItem $w={61}><span><u>P</u>rint</span><Caret s={7} c="#1d3050" /></MenuItem>
            <MenuItem $w={58}><span><u>E</u>-mail</span></MenuItem>
            <MenuItem $w={56}><span>B<u>u</u>rn</span><Caret s={7} c="#1d3050" /></MenuItem>
            <MenuItem $w={60}><span><u>O</u>pen</span><Caret s={7} c="#1d3050" /></MenuItem>
            <Spacer />
            <button aria-label="Help">
              <Icon w={16}>
                <circle cx="8" cy="8" r="7" fill="#23409c" stroke="#7f90b8" strokeWidth="1.500" />
                <path d="M5.800 6.200Q5.800 4.200 8 4.200T10.200 6.200Q10.200 7.500 8 8.500V9.600M8 10.800V12.300" stroke="#fff" strokeWidth="1.600" />
              </Icon>
            </button>
          </MenuBar>

          <PhotoArea>
            <CadWindow />
          </PhotoArea>

          <Controls>
            <Pill>
              <RoundTool $w={54} aria-label="Zoom">
                <Icon w={17}><circle cx="10" cy="7" r="5" fill="#dceafa" stroke="#2356ad" strokeWidth="2" /><path d="M10 4.500V9.500M7.500 7H12.500" stroke="#2356ad" strokeWidth="1.400" /><path d="M6 11L1.500 15.500" stroke="#1d3f90" strokeWidth="3" /></Icon>
                <Caret s={6} c="#2c5fae" />
              </RoundTool>
              <RoundTool $w={46} aria-label="Fit to window">
                <Icon w={16}><rect x="4.500" y="5.500" width="7" height="5" fill="#e8f1fb" stroke="#2356ad" strokeWidth="1.600" /><path d="M6 1H10L8 3.500ZM6 15H10L8 12.500ZM0 6V10L2.500 8ZM16 6V10L13.500 8Z" fill="#2356ad" stroke="none" /></Icon>
              </RoundTool>
              <StatusGap $w={7} />
              <SkipButton $side="left" aria-label="Previous">
                <Icon w={14} h={11}><path d="M1.500 0V11" stroke="#1b4fb0" strokeWidth="3" /><path d="M13 0V11L4 5.500Z" fill="#1b4fb0" stroke="none" /></Icon>
              </SkipButton>
              <PlayButton aria-label="Play slide show">
                <Icon w={20} h={17}><rect x=".5" y=".5" width="19" height="16" rx="1" fill="#fff" stroke="#cdd" /><rect x="3" y="3" width="14" height="11" fill="#9fd0e8" stroke="#8aa" /><path d="M3 11Q8 7 11 10T17 8V14H3Z" fill="#4d8f6d" stroke="none" /></Icon>
              </PlayButton>
              <SkipButton $side="right" aria-label="Next">
                <Icon w={14} h={11}><path d="M12.500 0V11" stroke="#1b4fb0" strokeWidth="3" /><path d="M1 0V11L10 5.500Z" fill="#1b4fb0" stroke="none" /></Icon>
              </SkipButton>
              <StatusGap $w={8} />
              <RoundTool $w={30} aria-label="Rotate counterclockwise">
                <Icon w={14}><path d="M5 3.500H7A4.500 4.500 0 1 1 3 10.500" stroke="#1f4397" strokeWidth="2.500" /><path d="M6 0V7.500L1 3.700Z" fill="#2b7bd0" stroke="none" /></Icon>
              </RoundTool>
              <RoundTool $w={32} aria-label="Rotate clockwise">
                <Icon w={14}><path d="M9 3.500H7A4.500 4.500 0 1 0 11 10.500" stroke="#1f4397" strokeWidth="2.500" /><path d="M8 0V7.500L13 3.700Z" fill="#2b7bd0" stroke="none" /></Icon>
              </RoundTool>
              <Divider />
              <RoundTool $w={30} aria-label="Delete">
                <Icon w={14}><path d="M1 1L13 13M13 1L1 13" stroke="#c5262f" strokeWidth="2" /></Icon>
              </RoundTool>
            </Pill>
          </Controls>

          <Taskbar time="09:48" camera />
        </Desktop>
        <Edge>
          <Noise />
        </Edge>
      </Screen>
    </>
  );
}
